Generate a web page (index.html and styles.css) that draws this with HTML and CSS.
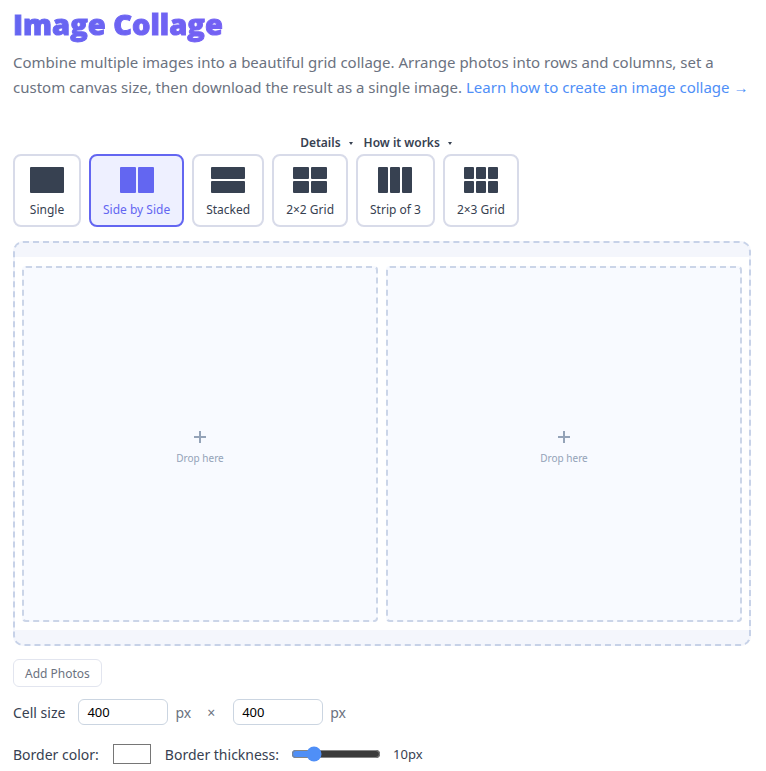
FILE: index.html
```html
<!DOCTYPE html>
<html lang="en">
<head>
  <meta charset="UTF-8">
  <meta name="viewport" content="width=device-width, initial-scale=1.0">
  <title>Image Collage</title>
  <link rel="stylesheet" href="styles.css">
</head>
<body>

  <main class="page">
    <h1>Image Collage</h1>
    <p class="intro">Combine multiple images into a beautiful grid collage. Arrange photos into rows and columns, set a custom canvas size, then download the result as a single image. <a href="#">Learn how to create an image collage →</a></p>

    <div class="info-links">
      <button type="button">Details <span class="caret"></span></button>
      <button type="button">How it works <span class="caret"></span></button>
    </div>

    <!-- Layout presets -->
    <div class="layouts">
      <button type="button" class="layout">
        <svg width="34" height="26" viewBox="0 0 34 26"><rect width="34" height="26" rx="1"/></svg>
        Single
      </button>
      <button type="button" class="layout active">
        <svg width="34" height="26" viewBox="0 0 34 26"><rect width="16" height="26" rx="1"/><rect x="18" width="16" height="26" rx="1"/></svg>
        Side by Side
      </button>
      <button type="button" class="layout">
        <svg width="34" height="26" viewBox="0 0 34 26"><rect width="34" height="12" rx="1"/><rect y="14" width="34" height="12" rx="1"/></svg>
        Stacked
      </button>
      <button type="button" class="layout">
        <svg width="34" height="26" viewBox="0 0 34 26"><rect width="16" height="12" rx="1"/><rect x="18" width="16" height="12" rx="1"/><rect y="14" width="16" height="12" rx="1"/><rect x="18" y="14" width="16" height="12" rx="1"/></svg>
        2×2 Grid
      </button>
      <button type="button" class="layout">
        <svg width="34" height="26" viewBox="0 0 34 26"><rect width="10" height="26" rx="1"/><rect x="12" width="10" height="26" rx="1"/><rect x="24" width="10" height="26" rx="1"/></svg>
        Strip of 3
      </button>
      <button type="button" class="layout">
        <svg width="34" height="26" viewBox="0 0 34 26"><rect width="10" height="12" rx="1"/><rect x="12" width="10" height="12" rx="1"/><rect x="24" width="10" height="12" rx="1"/><rect y="14" width="10" height="12" rx="1"/><rect x="12" y="14" width="10" height="12" rx="1"/><rect x="24" y="14" width="10" height="12" rx="1"/></svg>
        2×3 Grid
      </button>
    </div>

    <!-- Collage canvas -->
    <div class="stage">
      <div class="grid">
        <button type="button" class="cell">
          <svg width="14" height="14" viewBox="0 0 14 14"><path d="M7 1v12M1 7h12"/></svg>
          Drop here
        </button>
        <button type="button" class="cell">
          <svg width="14" height="14" viewBox="0 0 14 14"><path d="M7 1v12M1 7h12"/></svg>
          Drop here
        </button>
      </div>
    </div>

    <button type="button" class="add-photos">Add Photos</button>

    <div class="row size-row">
      <label for="cell-width">Cell size</label>
      <input type="text" inputmode="numeric" id="cell-width" value="400">
      <span class="unit">px</span>
      <span class="times">×</span>
      <input type="text" inputmode="numeric" id="cell-height" value="400" aria-label="Cell height">
      <span class="unit">px</span>
    </div>

    <div class="row border-row">
      <label for="border-color">Border color:</label>
      <input type="color" id="border-color" value="#ffffff">
      <label for="border-size">Border thickness:</label>
      <input type="range" id="border-size" min="0" max="50" value="10">
      <output for="border-size" id="border-value">10px</output>
    </div>
  </main>

  <script>
    // Show the current border thickness next to the slider
    const slider = document.getElementById("border-size");
    slider.addEventListener("input", function () {
      document.getElementById("border-value").textContent = slider.value + "px";
    });

    // Highlight the chosen layout
    const layouts = document.querySelectorAll(".layout");
    layouts.forEach(function (button) {
      button.addEventListener("click", function () {
        layouts.forEach(b => b.classList.remove("active"));
        button.classList.add("active");
      });
    });
  </script>

</body>
</html>
```
FILE: styles.css
```css
* {
  margin: 0;
  padding: 0;
  box-sizing: border-box;
}

body {
  font-family: 'Segoe UI', 'Noto Sans', 'Open Sans', sans-serif;
  font-size: 14px;
  color: #374151;
  background: #fff;
}

button, input {
  font-family: inherit;
}

button {
  cursor: pointer;
}

.page {
  padding: 4px 15px 6px 13px;
}

h1 {
  width: fit-content;
  font-family: 'Segoe UI', 'Open Sans', sans-serif;
  font-size: 29px;
  font-weight: 800;
  line-height: 40px;
  background: linear-gradient(135deg, #6366f1, #7561f4);
  background-clip: text;
  -webkit-background-clip: text;
  -webkit-text-stroke: 1px transparent;
  color: transparent;
}

.intro {
  margin-top: 6px;
  font-size: 15px;
  line-height: 25px;
  color: #6b7280;
}

.intro a {
  color: #4f8ff7;
  text-decoration: none;
}

/* Details / How it works */
.info-links {
  display: flex;
  justify-content: center;
  gap: 11px;
  margin-top: 33px;
  padding-right: 12px;
}

.info-links button {
  display: flex;
  align-items: center;
  gap: 8px;
  border: none;
  background: none;
  font-size: 12px;
  font-weight: 600;
  line-height: 20px;
  color: #374151;
}

.caret {
  border: 2px solid transparent;
  border-top: 3px solid #374151;
  border-bottom: none;
}

/* Layout presets */
.layouts {
  display: flex;
  flex-wrap: wrap;
  gap: 8px;
  margin-top: 1px;
}

.layout {
  display: flex;
  flex-direction: column;
  align-items: center;
  gap: 10px;
  min-width: 68px;
  padding: 11px 12px 8px;
  border: 2px solid #d8dbe9;
  border-radius: 8px;
  background: #fff;
  font-size: 12px;
  line-height: 14px;
  color: #374151;
}

.layout svg {
  fill: #374151;
}

.layout.active {
  border-color: #6366f1;
  background: #eef0ff;
  color: #6366f1;
}

.layout.active svg {
  fill: #6366f1;
}

/* Collage canvas */
.stage {
  margin-top: 14px;
  padding: 14px 0;
  border: 2px dashed #c7d2e8;
  border-radius: 10px;
  background: #f4f6fc;
}

.grid {
  display: grid;
  grid-template-columns: 1fr 1fr;
  gap: 8px;
  padding: 9px 7px 8px;
  background: #fff;
}

.cell {
  display: flex;
  flex-direction: column;
  align-items: center;
  justify-content: center;
  gap: 6px;
  aspect-ratio: 1;
  padding-top: 8px;
  border: 2px dashed #cbd5e8;
  border-radius: 4px;
  background: #f8faff;
  font-size: 10px;
  line-height: 16px;
  color: #94a3b8;
}

.cell svg {
  fill: none;
  stroke: #94a3b8;
  stroke-width: 2;
}

.add-photos {
  display: block;
  margin-top: 13px;
  padding: 1px 11px 0;
  border: 1px solid #e2e5ef;
  border-radius: 6px;
  background: #fff;
  font-size: 12px;
  line-height: 25px;
  color: #6b7280;
}

/* Settings */
.row {
  display: flex;
  align-items: center;
}

.size-row {
  margin-top: 12px;
}

.size-row input {
  width: 90px;
  height: 26px;
  margin-left: 13px;
  padding: 0 8px;
  border: 1px solid #cbd5e1;
  border-radius: 6px;
  background: #fff;
  font-size: 13px;
  color: #000;
}

.unit {
  margin-left: 7px;
  color: #6b7280;
}

.times {
  margin: 0 5px 0 16px;
  color: #6b7280;
}

.border-row {
  margin-top: 19px;
}

.border-row input[type="color"] {
  appearance: none;
  width: 38px;
  height: 20px;
  margin: 0 14px;
  border: 1px solid #767676;
  background: #fff;
}

.border-row input[type="color"]::-webkit-color-swatch-wrapper {
  padding: 0;
}

.border-row input[type="color"]::-webkit-color-swatch {
  border: none;
}

.border-row input[type="range"] {
  width: 90px;
  height: 16px;
  margin: 0 12px;
  color-scheme: dark;
  accent-color: #4f8ff7;
}

.border-row output {
  font-size: 13px;
}
```
